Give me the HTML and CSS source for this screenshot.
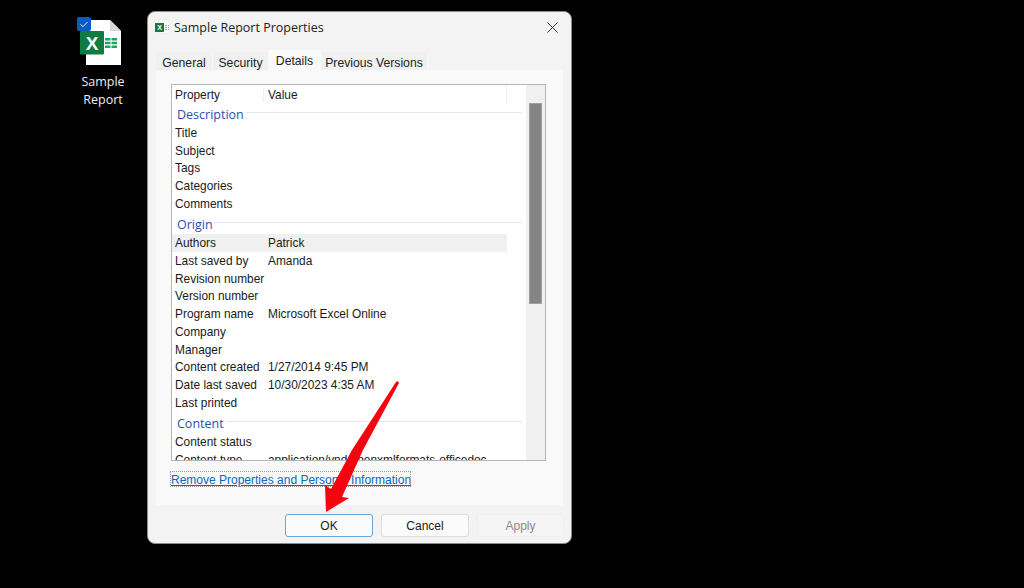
FILE: index.html
```html
<!DOCTYPE html>
<html lang="en">
<head>
<meta charset="utf-8">
<title>Sample Report Properties</title>
<link rel="stylesheet" href="styles.css">
</head>
<body>
<div class="desktop-icon">
  <svg class="file-icon" width="44" height="48" viewBox="0 0 44 48">
    <path d="M9 3h24l11 11v34H9z" fill="#fff"/>
    <path d="M33 3l11 11H33z" fill="#d8d8d8"/>
    <path d="M28 21h5.500v2.500H28zM34.500 21H40v2.500h-5.500zM28 24.700h5.500v2.600H28zM34.500 24.700H40v2.600h-5.500zM28 28.500h5.500V31H28zM34.500 28.500H40V31h-5.500z" fill="#21a366"/>
    <rect x="3" y="14" width="24" height="23.500" rx="1" fill="#107c41"/>
    <text class="x-big" x="15" y="32.500" text-anchor="middle">X</text>
    <rect x="0" y="0" width="14" height="14" rx="2" fill="#0a5cc2"/>
    <path d="M3.500 7.500l2.500 2.200L10.500 5" fill="none" stroke="#dfeaff" stroke-width="1"/>
  </svg>
  <div class="desktop-label">Sample<br>Report</div>
</div>

<main class="dialog">
  <header class="titlebar">
    <svg class="title-icon" width="16" height="16" viewBox="0 0 16 16">
      <path d="M4 1h8l3 3v10H4z" fill="#fff" stroke="#ddd" stroke-width=".5"/>
      <path d="M10 6h2v1h-2zM13 6h1v1h-1zM10 8h2v1h-2zM13 8h1v1h-1zM10 10h2v1h-2zM13 10h1v1h-1z" fill="#7cc49f"/>
      <rect x="0" y="4" width="9" height="9" fill="#107c41"/>
      <text class="x-small" x="4.500" y="11" text-anchor="middle">X</text>
    </svg>
    <span class="title-text">Sample Report Properties</span>
    <svg class="close-icon" width="11" height="11" viewBox="0 0 11 11">
      <path d="M.5.5l10 10M10.500.5l-10 10" stroke="#333" stroke-width="1" fill="none"/>
    </svg>
  </header>

  <nav class="tabs">
    <span class="tab tab-general">General</span>
    <span class="tab tab-security">Security</span>
    <span class="tab tab-active">Details</span>
    <span class="tab tab-versions">Previous Versions</span>
  </nav>

  <section class="panel">
    <div class="listbox">
      <div class="list-content">
        <div class="col-head">
          <span class="cell-prop">Property</span>
          <span class="cell-val">Value</span>
        </div>
        <div class="group group-first"><span>Description</span></div>
        <div class="row"><span class="cell-prop">Title</span></div>
        <div class="row"><span class="cell-prop">Subject</span></div>
        <div class="row"><span class="cell-prop">Tags</span></div>
        <div class="row"><span class="cell-prop">Categories</span></div>
        <div class="row"><span class="cell-prop">Comments</span></div>
        <div class="group"><span>Origin</span></div>
        <div class="row row-selected"><span class="cell-prop">Authors</span><span class="cell-val">Patrick</span></div>
        <div class="row"><span class="cell-prop">Last saved by</span><span class="cell-val">Amanda</span></div>
        <div class="row"><span class="cell-prop">Revision number</span></div>
        <div class="row"><span class="cell-prop">Version number</span></div>
        <div class="row"><span class="cell-prop">Program name</span><span class="cell-val">Microsoft Excel Online</span></div>
        <div class="row"><span class="cell-prop">Company</span></div>
        <div class="row"><span class="cell-prop">Manager</span></div>
        <div class="row"><span class="cell-prop">Content created</span><span class="cell-val">1/27/2014 9:45 PM</span></div>
        <div class="row"><span class="cell-prop">Date last saved</span><span class="cell-val">10/30/2023 4:35 AM</span></div>
        <div class="row"><span class="cell-prop">Last printed</span></div>
        <div class="group"><span>Content</span></div>
        <div class="row"><span class="cell-prop">Content status</span></div>
        <div class="row"><span class="cell-prop">Content type</span><span class="cell-val">application/vnd.openxmlformats-officedoc</span></div>
      </div>
      <div class="scrollbar"><div class="thumb"></div></div>
    </div>
    <a class="remove-link">Remove Properties and Personal Information</a>
  </section>

  <footer class="buttons">
    <button class="btn btn-default">OK</button>
    <button class="btn">Cancel</button>
    <button class="btn btn-disabled">Apply</button>
  </footer>
</main>

<svg class="arrow" width="1024" height="588" viewBox="0 0 1024 588">
  <path d="M396 382 Q398 380 399 383 L363 450 L342 497 L349 498 L326 512 L325 485 L331 489 L352 450 Z" fill="#f60310"/>
</svg>
</body>
</html>
```
FILE: styles.css
```css
* { box-sizing: border-box; }
html, body { margin: 0; height: 100%; }
body {
  position: relative;
  width: 1024px;
  height: 588px;
  overflow: hidden;
  background: #000;
  font-family: "Liberation Sans", Arial, sans-serif;
  font-size: 12px;
  color: #1a1a1a;
}

.desktop-icon {
  position: absolute;
  left: 73px;
  top: 17px;
  width: 60px;
  display: flex;
  flex-direction: column;
  align-items: center;
}
.file-icon { display: block; margin-right: 8px; }
.desktop-label {
  margin-top: 8px;
  color: #eee;
  font-family: "Open Sans", sans-serif;
  font-size: 12.5px;
  line-height: 18px;
  text-align: center;
}
.x-big { font: bold 19px "Liberation Sans", sans-serif; fill: #fff; }
.x-small { font: bold 7px "Liberation Sans", sans-serif; fill: #fff; }

.dialog {
  position: absolute;
  left: 147px;
  top: 11px;
  width: 425px;
  height: 533px;
  display: flex;
  flex-direction: column;
  background: #f3f3f3;
  border: 1px solid #8a8a8a;
  border-radius: 8px;
}

.titlebar {
  height: 30px;
  flex: none;
  display: flex;
  align-items: center;
  padding: 0 13px 0 7px;
}
.title-icon { flex: none; }
.title-text {
  margin-left: 3px;
  flex: 1;
  font-family: "Open Sans", sans-serif;
  font-size: 12.5px;
  color: #222;
}
.close-icon { flex: none; }

.tabs {
  display: flex;
  align-items: flex-end;
  height: 28px;
  padding: 0 0 0 8px;
  flex: none;
}
.tab {
  display: flex;
  align-items: center;
  justify-content: center;
  height: 18px;
  font-size: 12.2px;
  color: #222;
  background: #f0f0f0;
  border-right: 1px solid #f8f8f8;
  padding-top: 4px;
}
.tab-general { width: 57px; }
.tab-security { width: 56px; }
.tab-active { width: 52px; height: 20px; background: #f9f9f9; padding-top: 2px; }
.tab-versions { width: 107px; }

.panel {
  margin: 0 8px;
  height: 435px;
  flex: none;
  background: #f9f9f9;
  padding: 14px 15px 0;
  display: flex;
  flex-direction: column;
  align-items: flex-start;
}

.listbox {
  width: 375px;
  height: 377px;
  flex: none;
  display: flex;
  background: #fff;
  border: 1px solid #b5b5b5;
}
.list-content {
  width: 354px;
  height: 375px;
  overflow: hidden;
  flex: none;
}
.col-head {
  display: flex;
  align-items: center;
  height: 19px;
  width: 335px;
  padding-top: 1px;
  border-right: 1px solid #f0f0f0;
}
.cell-prop { width: 92px; padding-left: 3px; flex: none; white-space: nowrap; font-size: 11.9px; }
.cell-val { padding-left: 3px; white-space: nowrap; font-size: 11.9px; border-left: 1px solid transparent; }
.col-head .cell-prop { border-right: 1px solid #f0f0f0; }
.col-head .cell-val { border-left: 1px solid #fff; }

.group {
  display: flex;
  align-items: center;
  height: 21.5px;
  padding-left: 5px;
  padding-top: 1px;
  color: #2a4fb2;
  font-family: "Open Sans", sans-serif;
  font-size: 12.5px;
  width: 350px;
}
.group::after {
  content: "";
  flex: 1;
  height: 1px;
  margin: 0 0 3px 2px;
  background: #e2e6f2;
}
.group-first { height: 20px; padding-top: 0; }
.row {
  display: flex;
  align-items: center;
  height: 17.75px;
  width: 335px;
}
.row-selected { background: #f0f0f0; }

.scrollbar {
  width: 19px;
  height: 375px;
  flex: none;
  background: #f0f0f0;
  padding: 18px 3px 0;
}
.thumb {
  width: 13px;
  height: 201px;
  background: #858585;
  border: 1px solid #a0a0a0;
}

.remove-link {
  margin-top: 11px;
  padding-top: 1px;
  color: #0a66c8;
  font-size: 12px;
  line-height: 14px;
  text-decoration: underline;
  outline: 1px dotted #999;
  white-space: nowrap;
  width: 239px;
  height: 14px;
}

.buttons {
  display: flex;
  justify-content: flex-end;
  gap: 8px;
  padding: 9px 7px 0 0;
}
.btn {
  width: 88px;
  height: 23px;
  padding: 0;
  font-family: "Liberation Sans", sans-serif;
  font-size: 12px;
  color: #1a1a1a;
  background: #fbfbfb;
  border: 1px solid #dcdcdc;
  border-radius: 3px;
}
.btn-default { border: 1px solid #6aa5d6; }
.btn-disabled { width: 87px; color: #8a8a8a; background: #f5f5f5; border-color: #efefef; }

.arrow {
  position: absolute;
  left: 0;
  top: 0;
  pointer-events: none;
}
```
